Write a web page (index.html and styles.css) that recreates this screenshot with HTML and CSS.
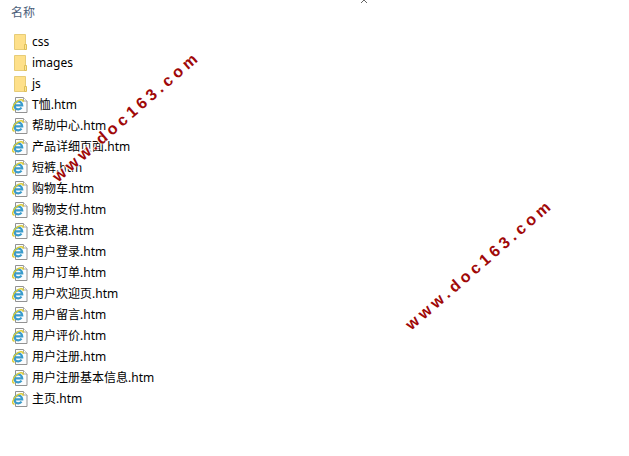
FILE: index.html
```
<!DOCTYPE html>
<html lang="zh-CN">
<head>
  <meta charset="UTF-8">
  <meta name="viewport" content="width=device-width, initial-scale=1.0">
  <title>名称</title>
  <link rel="stylesheet" href="styles.css">
</head>
<body>
  <!-- 图标 -->
  <svg class="sprite" width="0" height="0">
    <symbol id="folder" viewBox="0 0 16 18">
      <path d="M2.500 1.500h11v15h-11z" fill="#fee08a" stroke="#e6cc78"/>
      <path d="M12.500 11.500h2v5h-2z" fill="#fbe697" stroke="#dfbf58"/>
    </symbol>
    <symbol id="page" viewBox="0 0 16 18">
      <path d="M3.500 1.500h8l3.500 3.500v11.500h-11.500z" fill="#fbfcfd" stroke="#929292"/>
      <path d="M11.500 1.500v3.500h3.500" fill="#fff" stroke="#a5a5a5"/>
      <path d="M3 9.300H10.200A4 4 0 1 0 9.500 11.700" fill="none" stroke="#3a9bcb" stroke-width="2.200"/>
      <path d="M2.600 13.800C-.3 14.600 0 9.600 4.200 6C7.200 3.300 11.600 2.600 11 5.800" fill="none" stroke="#dccb35" stroke-width="1.500"/>
    </symbol>
  </svg>

  <div class="box">
    <table class="list">
      <thead>
        <tr><th><button class="sort" type="button">名称
          <svg class="arrow" viewBox="0 0 8 4"><path d="M1 3l3-3 3 3" fill="none" stroke="#666"/></svg>
        </button></th></tr>
      </thead>
      <tbody>
        <tr><td><a href="#"><svg class="icon"><use href="#folder"/></svg>css</a></td></tr>
        <tr><td><a href="#"><svg class="icon"><use href="#folder"/></svg>images</a></td></tr>
        <tr><td><a href="#"><svg class="icon"><use href="#folder"/></svg>js</a></td></tr>
        <tr><td><a href="#"><svg class="icon"><use href="#page"/></svg>T恤.htm</a></td></tr>
        <tr><td><a href="#"><svg class="icon"><use href="#page"/></svg>帮助中心.htm</a></td></tr>
        <tr><td><a href="#"><svg class="icon"><use href="#page"/></svg>产品详细页面.htm</a></td></tr>
        <tr><td><a href="#"><svg class="icon"><use href="#page"/></svg>短裤.htm</a></td></tr>
        <tr><td><a href="#"><svg class="icon"><use href="#page"/></svg>购物车.htm</a></td></tr>
        <tr><td><a href="#"><svg class="icon"><use href="#page"/></svg>购物支付.htm</a></td></tr>
        <tr><td><a href="#"><svg class="icon"><use href="#page"/></svg>连衣裙.htm</a></td></tr>
        <tr><td><a href="#"><svg class="icon"><use href="#page"/></svg>用户登录.htm</a></td></tr>
        <tr><td><a href="#"><svg class="icon"><use href="#page"/></svg>用户订单.htm</a></td></tr>
        <tr><td><a href="#"><svg class="icon"><use href="#page"/></svg>用户欢迎页.htm</a></td></tr>
        <tr><td><a href="#"><svg class="icon"><use href="#page"/></svg>用户留言.htm</a></td></tr>
        <tr><td><a href="#"><svg class="icon"><use href="#page"/></svg>用户评价.htm</a></td></tr>
        <tr><td><a href="#"><svg class="icon"><use href="#page"/></svg>用户注册.htm</a></td></tr>
        <tr><td><a href="#"><svg class="icon"><use href="#page"/></svg>用户注册基本信息.htm</a></td></tr>
        <tr><td><a href="#"><svg class="icon"><use href="#page"/></svg>主页.htm</a></td></tr>
      </tbody>
    </table>
    <!-- 水印,盖在列表上面 -->
    <span class="mark mark-left">www.doc163.com</span>
    <span class="mark mark-right">www.doc163.com</span>
  </div>
</body>
</html>
```
FILE: styles.css
```
*{
  padding: 0;
  margin: 0;
  box-sizing: border-box;
}
body{
  font: 12px/21px "Noto Sans", "Noto Sans CJK SC", sans-serif;
  color: #000;
  background-color: #fff;
}
.sprite{
  position: absolute;
}
.box{
  position: relative;
  overflow: hidden;
  min-height: 100vh;
}
.list{
  width: 100%;
  border-collapse: collapse;
}
.list th{
  padding-bottom: 7px;
  font-weight: normal;
  text-align: left;
}
.sort{
  display: block;
  width: 100%;
  height: 24px;
  padding-left: 11px;
  border: 0;
  background: none;
  font: inherit;
  color: #4c607a;
  text-align: left;
  cursor: pointer;
}
.arrow{
  position: absolute;
  left: 360px;
  top: 0;
  width: 8px;
  height: 4px;
}
.list td{
  height: 21px;
  padding-left: 12px;
}
.list a{
  display: flex;
  align-items: center;
  gap: 4px;
  height: 21px;
  color: #000;
  text-decoration: none;
}
.icon{
  width: 16px;
  height: 18px;
}
.mark{
  position: absolute;
  font: bold 16px/20px "Liberation Sans", Arial, sans-serif;
  letter-spacing: 4px;
  color: #a00808;
  text-shadow: 0 0 2px #fff, 0 0 2px #fff, 1px 1px 1px #fff, -1px -1px 1px #fff;
  white-space: nowrap;
  transform: rotate(-41deg);
  transform-origin: left center;
  pointer-events: none;
}
.mark-left{
  left: 55px;
  top: 169px;
}
.mark-right{
  left: 408px;
  top: 317px;
}
```
